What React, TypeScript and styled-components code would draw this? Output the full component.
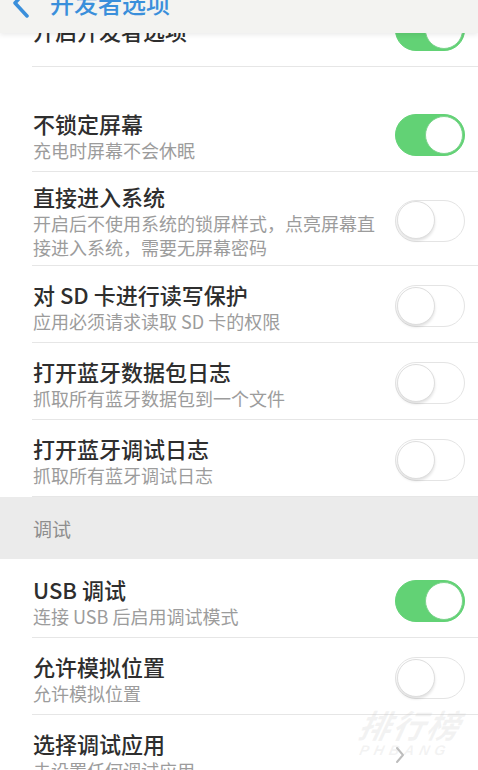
import React from 'react';
import styled, { createGlobalStyle } from 'styled-components';

const GlobalStyle = createGlobalStyle`
  html, body {
    margin: 0;
    padding: 0;
    background: #ffffff;
  }
  body {
    font-family: 'Noto Sans CJK SC', 'Noto Sans', sans-serif;
  }
`;

const Screen = styled.div`
  position: relative;
  width: 478px;
  height: 770px;
  overflow: hidden;
  background: #ffffff;
`;

// nav bar, its top half is cut off by the screenshot
const Header = styled.header`
  position: absolute;
  top: -28px;
  left: 0;
  right: 0;
  height: 61px;
  z-index: 5;
  display: flex;
  align-items: center;
  gap: 20px;
  padding-left: 12px;
  background: #f3f3f1;
  box-shadow: 0 2px 5px rgba(0, 0, 0, 0.08);
`;

const HeaderTitle = styled.h1`
  margin: 0;
  font-size: 24px;
  font-weight: 500;
  line-height: 30px;
  color: #3a8fdb;
`;

const List = styled.div`
  margin-top: -10px;
`;

const Row = styled.div`
  box-sizing: border-box;
  min-height: 77px;
  margin-left: 32px;
  padding: 10px 10px 6px 1px;
  display: flex;
  align-items: center;
  gap: 12px;
  border-bottom: 1px solid #e6e6e6;
`;

const Text = styled.div`
  flex: 1;
  min-width: 0;
  max-width: 350px;
`;

const Title = styled.div`
  font-size: 22px;
  font-weight: 500;
  line-height: 28px;
  color: #2e2e2e;
`;

const Sub = styled.div`
  margin-top: 1px;
  font-size: 18px;
  line-height: 24px;
  color: #9c9c9c;
`;

const Spacer = styled.div`
  height: 28px;
`;

const Section = styled.div`
  height: 62px;
  margin-bottom: 2px;
  padding-left: 33px;
  display: flex;
  align-items: center;
  background: #ebebeb;
  font-size: 19px;
  color: #8e8e8e;
`;

const Track = styled.span<{ $on: boolean }>`
  position: relative;
  flex: none;
  box-sizing: border-box;
  width: 70px;
  height: 42px;
  border-radius: 21px;
  background: ${(p) => (p.$on ? '#62d275' : '#ffffff')};
  border: 1.5px solid ${(p) => (p.$on ? '#62d275' : '#e4e4e4')};
`;

const Knob = styled.span<{ $on: boolean }>`
  position: absolute;
  top: 0.5px;
  left: ${(p) => (p.$on ? '29px' : '0.5px')};
  box-sizing: border-box;
  width: 38px;
  height: 38px;
  border-radius: 50%;
  background: #ffffff;
  border: 1.5px solid ${(p) => (p.$on ? '#7fd48f' : '#dedede')};
  box-shadow: ${(p) => (p.$on ? 'none' : '0 2px 3px rgba(0, 0, 0, 0.12)')};
`;

const Chevron = styled.svg`
  flex: none;
  margin-right: -2px;
`;

const Watermark = styled.div`
  position: absolute;
  right: 18px;
  top: 706px;
  display: flex;
  flex-direction: column;
  align-items: center;
  color: rgba(200, 200, 200, 0.22);
  font-style: italic;
  font-weight: 700;
  pointer-events: none;
  transform: skewX(-12deg);
`;

const MarkBig = styled.span`
  font-size: 32px;
  line-height: 36px;
  letter-spacing: 2px;
`;

const MarkSmall = styled.span`
  font-family: 'Liberation Sans', sans-serif;
  font-size: 14px;
  letter-spacing: 5px;
  line-height: 16px;
`;

const Toggle = ({ on }: { on: boolean }) => (
  <Track $on={on}>
    <Knob $on={on} />
  </Track>
);

type Item = { title: string; sub?: string; on?: boolean; link?: boolean };

const SettingRow = ({ item }: { item: Item }) => (
  <Row>
    <Text>
      <Title>{item.title}</Title>
      {item.sub && <Sub>{item.sub}</Sub>}
    </Text>
    {item.link ? (
      <Chevron width="10" height="18" viewBox="0 0 10 18">
        <path d="M2 2 L8 9 L2 16" fill="none" stroke="#bdbdbd" strokeWidth="2" strokeLinecap="round" strokeLinejoin="round" />
      </Chevron>
    ) : (
      <Toggle on={!!item.on} />
    )}
  </Row>
);

const top: Item[] = [
  { title: '不锁定屏幕', sub: '充电时屏幕不会休眠', on: true },
  { title: '直接进入系统', sub: '开启后不使用系统的锁屏样式，点亮屏幕直接进入系统，需要无屏幕密码' },
  { title: '对 SD 卡进行读写保护', sub: '应用必须请求读取 SD 卡的权限' },
  { title: '打开蓝牙数据包日志', sub: '抓取所有蓝牙数据包到一个文件' },
  { title: '打开蓝牙调试日志', sub: '抓取所有蓝牙调试日志' },
];

const debug: Item[] = [
  { title: 'USB 调试', sub: '连接 USB 后启用调试模式', on: true },
  { title: '允许模拟位置', sub: '允许模拟位置' },
  { title: '选择调试应用', sub: '未设置任何调试应用', link: true },
];

export default function App() {
  return (
    <Screen>
      <GlobalStyle />
      <Header>
        <svg width="18" height="30" viewBox="0 0 18 30">
          <path d="M15 2 L3 15 L15 28" fill="none" stroke="#3a8fdb" strokeWidth="3.5" strokeLinecap="round" strokeLinejoin="round" />
        </svg>
        <HeaderTitle>开发者选项</HeaderTitle>
      </Header>
      <List>
        <SettingRow item={{ title: '开启开发者选项', on: true }} />
        <Spacer />
        {top.map((item) => (
          <SettingRow key={item.title} item={item} />
        ))}
        <Section>调试</Section>
        {debug.map((item) => (
          <SettingRow key={item.title} item={item} />
        ))}
      </List>
      <Watermark>
        <MarkBig>排行榜</MarkBig>
        <MarkSmall>PHBANG</MarkSmall>
      </Watermark>
    </Screen>
  );
}
